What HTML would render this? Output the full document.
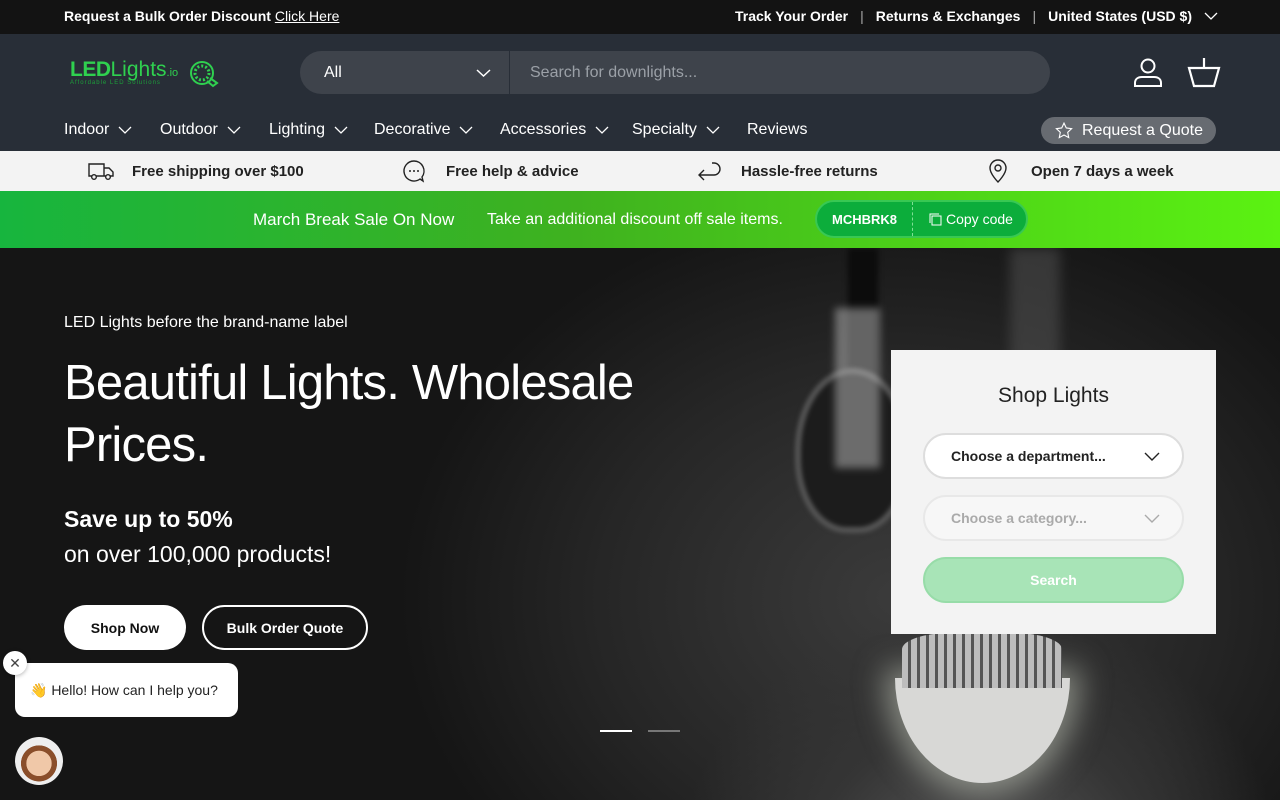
<!DOCTYPE html>
<html><head><meta charset="utf-8"><style>
*{box-sizing:border-box;margin:0;padding:0}
body{width:1280px;height:800px;overflow:hidden;font-family:"Liberation Sans",sans-serif;background:#111;position:relative}
.top{height:34px;background:#131313;color:#fff;font-size:14px;font-weight:bold;position:relative}
.top .l{position:absolute;left:64px;top:8px}
.top .l u{font-weight:normal}
.top .r{position:absolute;right:62px;top:8px;display:flex;gap:12px;align-items:center}
.top .sep{font-weight:normal;color:#aaa}
.hdr{height:117px;background:#282e37;position:relative;color:#fff}
.logo{position:absolute;left:70px;top:24px}
.search{position:absolute;left:300px;top:17px;width:750px;height:43px;border-radius:22px;background:#3e434b;display:flex;align-items:center}
.search .all{width:210px;padding-left:24px;font-size:16px;border-right:1px solid #282e37;height:100%;display:flex;align-items:center;position:relative}
.search .ph{padding-left:20px;color:#9ba0a7;font-size:16px}
.nav{position:absolute;top:121px;font-size:16px;color:#fff}
.nav span{position:absolute;display:flex;align-items:center;gap:9px;white-space:nowrap}
.quote{position:absolute;left:1041px;top:117px;width:175px;height:27px;border-radius:14px;background:#676b71;font-size:16px;display:flex;align-items:center;padding-left:14px;gap:9px;color:#fff}
.usp{height:40px;background:#f3f3f3;position:relative;font-size:15px;font-weight:bold;color:#222}
.usp div{position:absolute;top:8px;height:24px;display:flex;align-items:center}
.promo{height:57px;background:linear-gradient(90deg,#17b53e 0%,#3fb21f 45%,#5bf212 100%);position:relative;color:#fff}
.promo .t1{position:absolute;left:253px;top:19px;font-size:17px}
.promo .t2{position:absolute;left:487px;top:20px;font-size:16px}
.code{position:absolute;left:815px;top:200px;width:213px;height:38px;border-radius:19px;background:#0cad3b;border:2px solid #38c853;color:#fff;font-size:14px;display:flex;align-items:center}
.hero{position:absolute;left:0;top:248px;width:1280px;height:552px;overflow:hidden;
background:radial-gradient(ellipse 300px 260px at 980px 620px,#5a5a5a 0%,#353535 55%,transparent 100%),radial-gradient(ellipse 500px 400px at 900px 350px,#3b3b3b 0%,#262626 60%,#151515 100%);}
.cap{color:#fff;position:absolute}
.btn{position:absolute;top:605px;height:45px;border-radius:23px;font-size:14px;font-weight:bold;display:flex;align-items:center;justify-content:center}
.card{position:absolute;left:891px;top:350px;width:325px;height:284px;background:#f3f3f3}
.sel{position:absolute;left:32px;width:261px;height:46px;border-radius:23px;display:flex;align-items:center;padding-left:26px;font-size:14px;font-weight:bold}
</style></head><body>
<div class="top"><div class="l">Request a Bulk Order Discount <u>Click Here</u></div>
<div class="r"><span>Track Your Order</span><span class="sep">|</span><span>Returns &amp; Exchanges</span><span class="sep">|</span><span>United States (USD $)</span><svg width="14" height="8" viewBox="0 0 14 8"><path d="M1 1l6 6 6-6" stroke="#fff" fill="none" stroke-width="1.3"/></svg></div></div>
<div class="hdr">
<div class="logo"><span style="color:#2fd04f;font-size:21px;font-weight:bold;letter-spacing:-0.5px">LED</span><span style="color:#2fd04f;font-size:21px">Lights</span><span style="color:#2fd04f;font-size:11px">.io</span>
<div style="color:#1d9f3a;font-size:6px;letter-spacing:1px;margin-top:-2px">Affordable LED Solutions</div>
<svg style="position:absolute;left:118px;top:2px" width="32" height="28" viewBox="0 0 32 28"><circle cx="14" cy="13" r="11" fill="none" stroke="#2fd04f" stroke-width="2"/><circle cx="14" cy="13" r="7" fill="none" stroke="#2fd04f" stroke-dasharray="2 2" stroke-width="3"/><path d="M22 18l7 5-4 3-6-5" fill="none" stroke="#2fd04f" stroke-width="2"/></svg></div>
<div class="search"><div class="all">All<svg style="position:absolute;right:18px" width="15" height="8" viewBox="0 0 15 8"><path d="M1 1l6.5 6 6.5-6" stroke="#fff" fill="none" stroke-width="1.5"/></svg></div><div class="ph">Search for downlights...</div></div>
<svg style="position:absolute;left:1132px;top:22px" width="32" height="32" viewBox="0 0 32 32"><circle cx="16" cy="10" r="6.5" fill="none" stroke="#fff" stroke-width="2"/><path d="M3 30v-3c0-4 3-6 7-6h12c4 0 7 2 7 6v3z" fill="none" stroke="#fff" stroke-width="2"/></svg>
<svg style="position:absolute;left:1187px;top:22px" width="34" height="32" viewBox="0 0 34 32"><path d="M17 2v10M2 12h30l-5 18H7z" fill="none" stroke="#fff" stroke-width="2.2"/></svg>
</div>
<div class="nav">
<span style="left:64px">Indoor <svg width="14" height="8" viewBox="0 0 14 8"><path d="M1 1l6 6 6-6" stroke="#fff" fill="none" stroke-width="1.3"/></svg></span>
<span style="left:160px">Outdoor <svg width="14" height="8" viewBox="0 0 14 8"><path d="M1 1l6 6 6-6" stroke="#fff" fill="none" stroke-width="1.3"/></svg></span>
<span style="left:269px">Lighting <svg width="14" height="8" viewBox="0 0 14 8"><path d="M1 1l6 6 6-6" stroke="#fff" fill="none" stroke-width="1.3"/></svg></span>
<span style="left:374px">Decorative <svg width="14" height="8" viewBox="0 0 14 8"><path d="M1 1l6 6 6-6" stroke="#fff" fill="none" stroke-width="1.3"/></svg></span>
<span style="left:500px">Accessories <svg width="14" height="8" viewBox="0 0 14 8"><path d="M1 1l6 6 6-6" stroke="#fff" fill="none" stroke-width="1.3"/></svg></span>
<span style="left:632px">Specialty <svg width="14" height="8" viewBox="0 0 14 8"><path d="M1 1l6 6 6-6" stroke="#fff" fill="none" stroke-width="1.3"/></svg></span>
<span style="left:747px">Reviews</span></div>
<div class="quote"><svg width="18" height="17" viewBox="0 0 24 23"><path d="M12 1.5l3.1 6.6 7.2.9-5.3 5 1.4 7.1L12 17.6l-6.4 3.5 1.4-7.1-5.3-5 7.2-.9z" fill="none" stroke="#fff" stroke-width="1.5"/></svg>Request a Quote</div>
<div class="usp">
<div style="left:88px"><svg width="26" height="20" viewBox="0 0 26 20"><path d="M1 3h15v12H1zM16 7h5l4 4v4h-9" fill="none" stroke="#222" stroke-width="1.4"/><circle cx="6" cy="16" r="2.3" fill="#f3f3f3" stroke="#222" stroke-width="1.4"/><circle cx="20" cy="16" r="2.3" fill="#f3f3f3" stroke="#222" stroke-width="1.4"/></svg><span style="margin-left:18px">Free shipping over $100</span></div>
<div style="left:402px"><svg width="24" height="24" viewBox="0 0 24 24"><path d="M12 2a10 10 0 1 0 6 18l3 2-1-4A10 10 0 0 0 12 2z" fill="none" stroke="#222" stroke-width="1.4"/><circle cx="8" cy="12" r="1" fill="#222"/><circle cx="12" cy="12" r="1" fill="#222"/><circle cx="16" cy="12" r="1" fill="#222"/></svg><span style="margin-left:20px">Free help &amp; advice</span></div>
<div style="left:697px"><svg width="24" height="22" viewBox="0 0 24 22"><path d="M15 3h2a6 6 0 0 1 0 12H3m4-5l-5 5 5 5" fill="none" stroke="#222" stroke-width="1.4"/></svg><span style="margin-left:20px">Hassle-free returns</span></div>
<div style="left:988px"><svg width="20" height="24" viewBox="0 0 20 24"><path d="M10 23s8-8 8-14a8 8 0 0 0-16 0c0 6 8 14 8 14z" fill="none" stroke="#222" stroke-width="1.4"/><circle cx="10" cy="9" r="3" fill="none" stroke="#222" stroke-width="1.4"/></svg><span style="margin-left:23px">Open 7 days a week</span></div>
</div>
<div class="promo"><div class="t1">March Break Sale On Now</div><div class="t2">Take an additional discount off sale items.</div></div>
<div class="code"><span style="width:95px;text-align:center;font-weight:bold;font-size:13px">MCHBRK8</span><span style="border-left:1px dashed #7fe095;height:100%"></span><span style="padding-left:16px;display:flex;align-items:center;gap:4px"><svg width="13" height="13" viewBox="0 0 13 13"><rect x="3" y="3" width="9" height="9" fill="none" stroke="#fff"/><path d="M1 10V1h9" fill="none" stroke="#fff"/></svg>Copy code</span></div>
<div class="hero">
<div style="position:absolute;left:848px;top:0;width:30px;height:140px;background:#0c0c0c;filter:blur(3px)"></div>
<div style="position:absolute;left:795px;top:120px;width:115px;height:165px;border-radius:50% 50% 45% 45%;border:6px solid #555;background:#1c1c1c;filter:blur(2px)"></div>
<div style="position:absolute;left:835px;top:60px;width:45px;height:160px;background:#bbb;opacity:.5;filter:blur(4px)"></div>
<div style="position:absolute;left:1010px;top:0;width:50px;height:120px;background:#555;opacity:.5;filter:blur(6px)"></div>
<div style="position:absolute;left:895px;top:430px;width:175px;height:105px;border-radius:0 0 50% 50%/0 0 100% 100%;background:#d8d8d6;box-shadow:0 0 30px 10px rgba(220,225,210,.5)"></div>
<div style="position:absolute;left:902px;top:385px;width:160px;height:55px;background:repeating-linear-gradient(90deg,#bdbdbd 0 6px,#555 6px 9px);border-radius:30% 30% 0 0"></div>
<div style="position:absolute;left:600px;top:482px;width:32px;height:2px;background:#fff"></div>
<div style="position:absolute;left:648px;top:482px;width:32px;height:2px;background:#777"></div>
</div>
<div class="cap" style="left:64px;top:314px;font-size:16px">LED Lights before the brand-name label</div>
<div class="cap" style="left:64px;top:352px;font-size:49px;line-height:62px;letter-spacing:-0.8px">Beautiful Lights. Wholesale<br>Prices.</div>
<div class="cap" style="left:64px;top:506px;font-size:23px;font-weight:bold">Save up to 50%</div>
<div class="cap" style="left:64px;top:541px;font-size:23px">on over 100,000 products!</div>
<div class="btn" style="left:64px;width:122px;background:#fff;color:#111">Shop Now</div>
<div class="btn" style="left:202px;width:166px;border:2px solid #fff;color:#fff">Bulk Order Quote</div>
<div class="card">
<div style="text-align:center;margin-top:34px;font-size:21px;color:#222">Shop Lights</div>
<div class="sel" style="top:83px;background:#fff;border:2px solid #ddd;color:#222">Choose a department...<svg style="position:absolute;right:22px" width="16" height="9" viewBox="0 0 16 9"><path d="M1 1l7 7 7-7" stroke="#222" fill="none" stroke-width="1.4"/></svg></div>
<div class="sel" style="top:145px;background:#f7f7f7;border:2px solid #e8e8e8;color:#aaa">Choose a category...<svg style="position:absolute;right:22px" width="16" height="9" viewBox="0 0 16 9"><path d="M1 1l7 7 7-7" stroke="#aaa" fill="none" stroke-width="1.4"/></svg></div>
<div class="sel" style="top:207px;background:#a8e4b7;border:2px solid #97dca8;color:#fff;justify-content:center;padding:0">Search</div>
</div>
<div style="position:absolute;left:15px;top:663px;width:223px;height:54px;background:#fff;border-radius:10px;color:#222;display:flex;align-items:center;padding-left:15px;font-size:14px;white-space:nowrap">👋 Hello! How can I help you?</div>
<div style="position:absolute;left:3px;top:651px;width:24px;height:24px;border-radius:50%;background:#fff;box-shadow:0 1px 4px rgba(0,0,0,.3);color:#444;font-size:14px;text-align:center;line-height:24px">✕</div>
<div style="position:absolute;left:15px;top:737px;width:48px;height:48px;border-radius:50%;background:radial-gradient(circle at 50% 55%,#f0c8a8 0 35%,#8a4e2a 36% 50%,#eee 51%)"></div>
</body></html>
